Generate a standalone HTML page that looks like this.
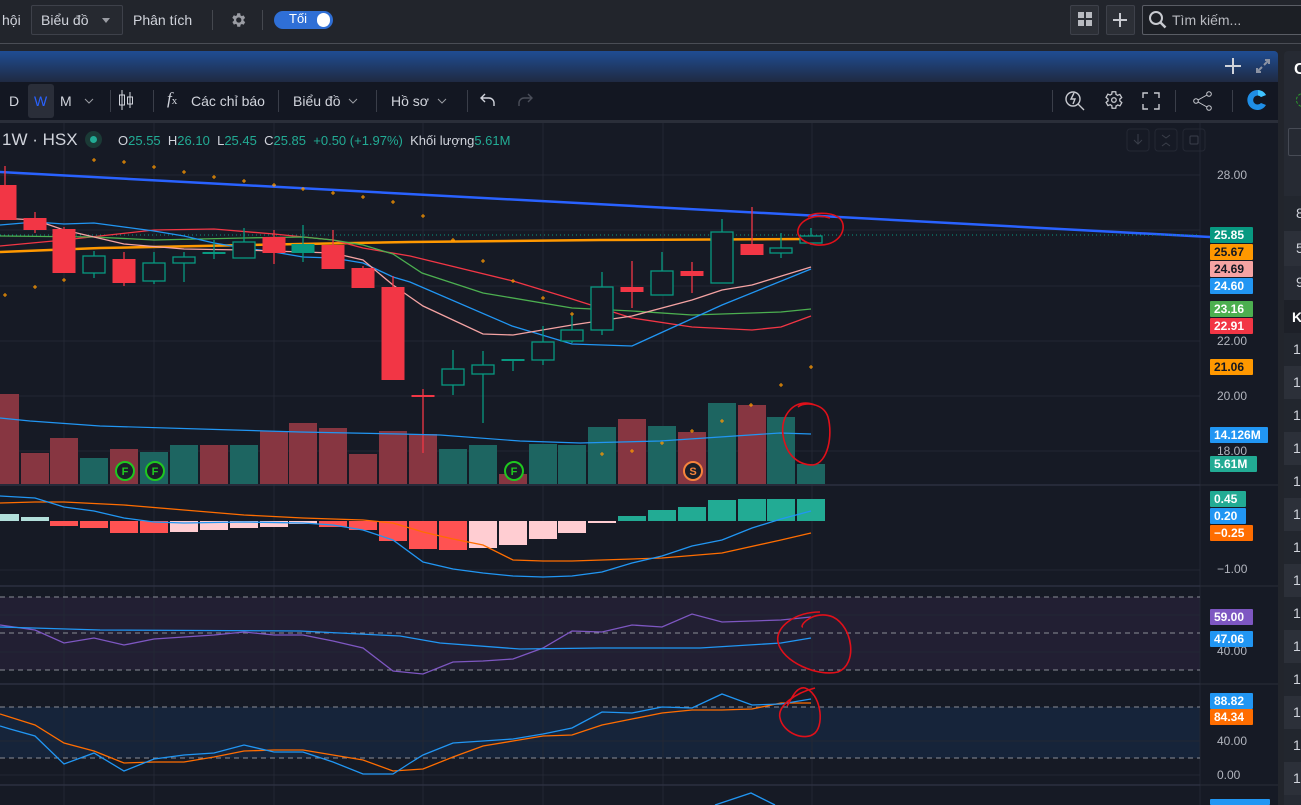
<!DOCTYPE html>
<html><head><meta charset="utf-8"><style>
*{margin:0;padding:0;box-sizing:border-box}
body{width:1301px;height:805px;overflow:hidden;background:#22252c;font-family:"Liberation Sans","Noto Sans CJK SC",sans-serif;color:#d1d4dc;position:relative}
.a{position:absolute}
.t{font-size:14px;white-space:nowrap}
.sep{position:absolute;width:1px;background:#3a3e49}
.badge{position:absolute;left:1210px;height:16px;font-size:12px;font-weight:bold;line-height:16px;padding-left:4px;border-radius:1px}
.ax{position:absolute;left:1217px;font-size:12px;color:#b2b5be}
.row{position:absolute;left:1284px;width:17px;height:33px;font-size:14px;color:#d1d4dc;padding:8px 0 0 9px}
</style></head><body>
<div class="a" style="left:0;top:0;width:1301px;height:44px;background:#22252c;border-bottom:1px solid #4a4d55"></div>
<div class="a t" style="top:12px;left:2px">hội</div>
<div class="a" style="left:31px;top:5px;width:92px;height:30px;border:1px solid #3e414a;background:#262930;border-radius:2px"></div>
<div class="a t" style="left:41px;top:12px">Biểu đồ</div>
<div class="a" style="left:102px;top:18px;width:0;height:0;border-left:4px solid transparent;border-right:4px solid transparent;border-top:5px solid #9a9ca3"></div>
<div class="a t" style="left:133px;top:12px">Phân tích</div>
<div class="sep" style="left:212px;top:10px;height:20px;background:#45484f"></div>
<svg class="a" style="left:229px;top:11px" width="18" height="18" viewBox="0 0 24 24"><path fill="#9a9ca3" d="M19.4 13a7.5 7.5 0 000-2l2.1-1.6-2-3.5-2.5 1a7 7 0 00-1.7-1L15 3h-4l-.4 2.6a7 7 0 00-1.7 1l-2.5-1-2 3.5L6.6 11a7.5 7.5 0 000 2l-2.1 1.6 2 3.5 2.5-1a7 7 0 001.7 1L11 21h4l.4-2.6a7 7 0 001.7-1l2.5 1 2-3.5zM13 15.5a3.5 3.5 0 110-7 3.5 3.5 0 010 7z"/></svg>
<div class="sep" style="left:262px;top:10px;height:20px;background:#45484f"></div>
<div class="a" style="left:274px;top:11px;width:59px;height:18px;background:#2f6fd6;border-radius:9px"></div>
<div class="a" style="left:289px;top:11px;font-size:13px;color:#fff">Tối</div>
<div class="a" style="left:317px;top:13px;width:13px;height:14px;background:#fff;border-radius:7px"></div>
<div class="a" style="left:1070px;top:5px;width:29px;height:30px;border:1px solid #3e414a;background:#2c2f36;border-radius:2px"></div>
<div class="a" style="left:1078px;top:12px;width:6px;height:6px;background:#b8bac0"></div><div class="a" style="left:1086px;top:12px;width:6px;height:6px;background:#b8bac0"></div>
<div class="a" style="left:1078px;top:20px;width:6px;height:6px;background:#b8bac0"></div><div class="a" style="left:1086px;top:20px;width:6px;height:6px;background:#b8bac0"></div>
<div class="a" style="left:1106px;top:5px;width:29px;height:30px;border:1px solid #3e414a;background:#2c2f36;border-radius:2px"></div>
<div class="a" style="left:1113px;top:19px;width:14px;height:2px;background:#c8cad0"></div><div class="a" style="left:1119px;top:13px;width:2px;height:14px;background:#c8cad0"></div>
<div class="a" style="left:1142px;top:5px;width:165px;height:30px;border:1px solid #5a5d65;background:#1c1f25;border-radius:2px"></div>
<svg class="a" style="left:1148px;top:10px" width="20" height="20" viewBox="0 0 20 20"><circle cx="8" cy="8" r="6" fill="none" stroke="#c8cad0" stroke-width="2"/><path d="M12.5 12.5l5 5" stroke="#c8cad0" stroke-width="2.5"/></svg>
<div class="a t" style="left:1172px;top:12px;color:#b8bac0">Tìm kiếm...</div>

<div class="a" style="left:1284px;top:51px;width:17px;height:754px;background:#262a33;border-radius:4px 0 0 0"></div>
<div class="a" style="left:1294px;top:61px;font-size:16px;font-weight:bold;color:#fff">C</div>
<div class="a" style="left:1296px;top:93px;width:14px;height:14px;border:1px dashed #2c9a2c;border-radius:50%"></div>
<div class="a" style="left:1288px;top:128px;width:20px;height:28px;border:1px solid #474b55;border-radius:2px"></div>
<div class="a" style="left:1284px;top:196px;width:17px;height:35px;background:#22262e"></div>
<div class="a" style="left:1296px;top:205px;font-size:14px">8</div>
<div class="a" style="left:1284px;top:231px;width:17px;height:35px;background:#2c3039"></div>
<div class="a" style="left:1296px;top:240px;font-size:14px">5</div>
<div class="a" style="left:1296px;top:274px;font-size:14px">9</div>
<div class="a" style="left:1284px;top:300px;width:17px;height:33px;background:#1d2028"></div>
<div class="a" style="left:1292px;top:309px;font-size:14px;font-weight:bold;color:#fff">K</div>
<div class="row" style="top:333px;background:#22262e">1</div>
<div class="row" style="top:366px;background:#2c3039">1</div>
<div class="row" style="top:399px;background:#22262e">1</div>
<div class="row" style="top:432px;background:#2c3039">1</div>
<div class="row" style="top:465px;background:#22262e">1</div>
<div class="row" style="top:498px;background:#2c3039">1</div>
<div class="row" style="top:531px;background:#22262e">1</div>
<div class="row" style="top:564px;background:#2c3039">1</div>
<div class="row" style="top:597px;background:#22262e">1</div>
<div class="row" style="top:630px;background:#2c3039">1</div>
<div class="row" style="top:663px;background:#22262e">1</div>
<div class="row" style="top:696px;background:#2c3039">1</div>
<div class="row" style="top:729px;background:#22262e">1</div>
<div class="row" style="top:762px;background:#2c3039">1</div>

<div class="a" style="left:0;top:51px;width:1278px;height:31px;background:linear-gradient(#1f4d93,#1f2a42);border-radius:0 4px 0 0"></div>
<div class="a" style="left:1225px;top:65px;width:16px;height:2px;background:#d0d3da"></div><div class="a" style="left:1232px;top:58px;width:2px;height:16px;background:#d0d3da"></div>
<svg class="a" style="left:1254px;top:57px" width="18" height="18" viewBox="0 0 18 18"><path d="M3 15l5-5M15 3l-5 5M11 3h4v4M3 11v4h4" stroke="#8c93a3" stroke-width="2" fill="none"/></svg>
<div class="a" style="left:0;top:82px;width:1278px;height:38px;background:#131722"></div>
<div class="a" style="left:0;top:120px;width:1278px;height:3px;background:#2a2e39"></div>
<div class="a t" style="left:9px;top:93px">D</div>
<div class="a" style="left:28px;top:84px;width:26px;height:34px;background:#2a2e39;border-radius:3px"></div>
<div class="a t" style="left:34px;top:93px;color:#2962ff">W</div>
<div class="a t" style="left:60px;top:93px">M</div>
<svg class="a" style="left:84px;top:97px" width="10" height="8"><path d="M1 2l4 4 4-4" stroke="#9a9ca3" fill="none"/></svg>
<div class="sep" style="left:110px;top:90px;height:22px"></div>
<svg class="a" style="left:117px;top:89px" width="18" height="22" viewBox="0 0 18 22"><path d="M5 1v20M13 3v16" stroke="#d1d4dc"/><rect x="2.5" y="6" width="5" height="10" fill="none" stroke="#d1d4dc"/><rect x="10.5" y="8" width="5" height="7" fill="none" stroke="#d1d4dc"/></svg>
<div class="sep" style="left:153px;top:90px;height:22px"></div>
<div class="a" style="left:167px;top:89px;font-family:'Liberation Serif',serif;font-style:italic;font-size:17px">f<span style="font-size:11px;font-style:normal">x</span></div>
<div class="a t" style="left:191px;top:93px">Các chỉ báo</div>
<div class="sep" style="left:278px;top:90px;height:22px"></div>
<div class="a t" style="left:293px;top:93px">Biểu đồ</div>
<svg class="a" style="left:348px;top:97px" width="10" height="8"><path d="M1 2l4 4 4-4" stroke="#9a9ca3" fill="none"/></svg>
<div class="sep" style="left:376px;top:90px;height:22px"></div>
<div class="a t" style="left:391px;top:93px">Hồ sơ</div>
<svg class="a" style="left:437px;top:97px" width="10" height="8"><path d="M1 2l4 4 4-4" stroke="#9a9ca3" fill="none"/></svg>
<div class="sep" style="left:467px;top:90px;height:22px"></div>
<svg class="a" style="left:479px;top:92px" width="18" height="16"><path d="M6 2L2 6l4 4M2 6h8a5 5 0 015 5v3" stroke="#d1d4dc" fill="none" stroke-width="1.4"/></svg>
<svg class="a" style="left:516px;top:92px" width="18" height="16"><path d="M12 2l4 4-4 4M16 6H8a5 5 0 00-5 5v3" stroke="#4a4e59" fill="none" stroke-width="1.4"/></svg>
<div class="sep" style="left:1052px;top:90px;height:22px"></div>
<svg class="a" style="left:1064px;top:89px" width="22" height="22" viewBox="0 0 22 22"><circle cx="9" cy="10" r="7" fill="none" stroke="#c8cad0" stroke-width="1.4"/><path d="M14 15l6 6M10 4l-3 6h4l-2 5" stroke="#c8cad0" fill="none" stroke-width="1.4"/></svg>
<svg class="a" style="left:1102px;top:89px" width="22" height="22" viewBox="0 0 24 24"><path fill="none" stroke="#c8cad0" stroke-width="1.4" d="M19.4 13a7.5 7.5 0 000-2l2.1-1.6-2-3.5-2.5 1a7 7 0 00-1.7-1L15 3h-4l-.4 2.6a7 7 0 00-1.7 1l-2.5-1-2 3.5L6.6 11a7.5 7.5 0 000 2l-2.1 1.6 2 3.5 2.5-1a7 7 0 001.7 1L11 21h4l.4-2.6a7 7 0 001.7-1l2.5 1 2-3.5z"/><circle cx="13" cy="12" r="2.5" fill="none" stroke="#c8cad0" stroke-width="1.4"/></svg>
<svg class="a" style="left:1142px;top:92px" width="18" height="18"><path d="M1 6V1h5M12 1h5v5M17 12v5h-5M6 17H1v-5" stroke="#c8cad0" fill="none" stroke-width="1.4"/></svg>
<div class="sep" style="left:1175px;top:90px;height:22px"></div>
<svg class="a" style="left:1193px;top:91px" width="20" height="20"><circle cx="16" cy="3" r="2.3" fill="none" stroke="#c8cad0"/><circle cx="3" cy="10" r="2.3" fill="none" stroke="#c8cad0"/><circle cx="16" cy="17" r="2.3" fill="none" stroke="#c8cad0"/><path d="M5 9l9-5M5 11l9 5" stroke="#c8cad0"/></svg>
<div class="sep" style="left:1232px;top:90px;height:22px"></div>
<svg class="a" style="left:1246px;top:88px" width="24" height="24" viewBox="0 0 24 24"><path d="M20 7a10 10 0 100 10l-5-2a4.5 4.5 0 110-6z" fill="#1f8ee6"/><path d="M12 2a10 10 0 018 5l-5 2a4.5 4.5 0 00-3-1.5z" fill="#40c4ff"/></svg>

<svg class="a" style="left:0;top:123px" width="1278" height="682" viewBox="0 123 1278 682">
<rect x="0" y="123" width="1278" height="682" fill="#161a25"/>
<rect x="0" y="597" width="1200" height="73" fill="#221f33"/>
<rect x="0" y="707" width="1200" height="51" fill="#16243a"/>
<g stroke="#232734" stroke-width="1">
<path d="M0 175H1200M0 230H1200M0 286H1200M0 341H1200M0 396H1200M0 451H1200M0 570H1200M0 615H1200M0 652H1200M0 741H1200M0 775H1200"/>
<path d="M64 123V805M154 123V805M274 123V805M423 123V805M543 123V805M663 123V805M812 123V805M1200 123V805"/>
</g>
<g stroke="#2c3040" stroke-width="1.5"><path d="M0 485H1200M0 586H1200M0 684H1200M0 785H1200"/></g>
<g stroke="#2a2e39"><path d="M1200 485H1278M1200 586H1278M1200 684H1278M1200 785H1278"/></g>
<g stroke="#8a8d96" stroke-dasharray="5,4" stroke-width="1"><path d="M0 597H1200M0 633H1200M0 670H1200M0 707H1200M0 758H1200"/></g>
<rect x="1127" y="129" width="22" height="22" rx="3" fill="none" stroke="#242834"/><rect x="1155" y="129" width="22" height="22" rx="3" fill="none" stroke="#242834"/><rect x="1183" y="129" width="22" height="22" rx="3" fill="none" stroke="#242834"/>
<path d="M1138 134v10M1134 140l4 4 4-4M1162 135l4 3 4-3M1162 146l4-3 4 3" stroke="#3a3e4a" fill="none"/><rect x="1190" y="136" width="8" height="8" rx="1" fill="none" stroke="#3a3e4a"/>
<g id="vol"></g>
<polyline fill="none" stroke="#2962ff" stroke-width="2.5" points="0,172 1210,237"/>
<path d="M0 235H1200" stroke="#089981" stroke-dasharray="1,3"/>
<polyline fill="none" stroke="#ff9800" stroke-width="2.5" points="0,252 100,248 200,246 300,244 410,242 600,240 811,239"/>
<polyline fill="none" stroke="#f23645" stroke-width="1.3" points="0,246 64,240 154,230 214,229 274,234 333,240 363,248 410,256 513,281 572,299 632,318 692,327 752,330 781,327 811,316"/>
<polyline fill="none" stroke="#4caf50" stroke-width="1.3" points="0,236 94,237 154,240 244,238 303,237 333,240 363,245 393,254 422,273 483,293 572,308 632,311 692,315 781,312 811,309"/>
<polyline fill="none" stroke="#2196f3" stroke-width="1.3" points="0,225 35,222 64,224 94,223 124,227 154,231 184,236 214,243 244,248 274,252 303,257 333,258 363,263 393,277 410,282 512,326 572,344 632,346 722,305 811,269"/>
<polyline fill="none" stroke="#f5a3a3" stroke-width="1.3" points="0,218 35,220 64,230 124,244 184,249 244,250 303,252 333,253 363,260 393,285 410,297 423,306 483,334 513,335 572,325 632,316 692,300 722,290 752,285 811,267"/>
<g id="cdl"></g>
<g id="dots" fill="#ff9800"></g>
<polyline fill="none" stroke="#2196f3" stroke-width="1.2" points="0,418 30,421 100,426 200,429 300,432 400,434 440,435 520,441 580,443 660,441 720,437 780,433 811,434"/>
<g font-size="11" font-weight="bold" text-anchor="middle">
<circle cx="125" cy="471" r="9" fill="#1a1e28" stroke="#1fc81f" stroke-width="2"/><text x="125" y="475" fill="#1fc81f">F</text>
<circle cx="155" cy="471" r="9" fill="#1a1e28" stroke="#1fc81f" stroke-width="2"/><text x="155" y="475" fill="#1fc81f">F</text>
<circle cx="514" cy="471" r="9" fill="#1a1e28" stroke="#1fc81f" stroke-width="2"/><text x="514" y="475" fill="#1fc81f">F</text>
<circle cx="693" cy="471" r="9" fill="#1a1e28" stroke="#f7843c" stroke-width="2"/><text x="693" y="475" fill="#f7843c">S</text>
</g>
<g id="macd"></g>
<polyline fill="none" stroke="#ff6d00" stroke-width="1.3" points="0,503 35,502 64,502 124,505 184,510 244,515 303,518 363,520 393,523 423,532 453,539 483,545 513,560 543,561 572,561 602,560 662,558 722,553 781,540 811,533"/>
<polyline fill="none" stroke="#2196f3" stroke-width="1.3" points="0,496 35,498 64,507 94,511 124,518 154,522 184,523 244,522 303,523 333,525 363,530 393,540 423,562 453,569 483,573 513,576 543,577 572,576 602,572 632,563 662,556 692,546 722,540 752,528 781,519 811,511"/>
<polyline fill="none" stroke="#7e57c2" stroke-width="1.3" points="0,625 35,630 64,643 94,638 124,645 154,639 184,637 214,635 244,632 274,635 303,635 333,641 363,648 393,671 423,674 453,662 483,661 513,659 543,648 572,631 602,632 632,625 662,627 692,614 722,622 752,621 781,620 811,617"/>
<polyline fill="none" stroke="#2196f3" stroke-width="1.3" points="0,627 100,630 300,631 400,636 440,643 520,649 600,648 700,648 781,643 811,638"/>
<polyline fill="none" stroke="#ff6d00" stroke-width="1.3" points="0,714 35,725 64,743 94,751 124,763 154,762 184,762 214,757 244,751 274,750 303,750 333,755 363,760 393,771 423,769 453,757 483,746 513,741 543,736 572,735 602,725 632,719 662,713 692,710 722,710 752,709 781,703 811,703"/>
<polyline fill="none" stroke="#2196f3" stroke-width="1.3" points="0,726 10,729 35,736 64,764 94,753 124,771 154,759 184,755 214,753 244,745 274,752 303,752 333,762 363,774 393,774 410,763 423,755 453,743 483,741 513,739 543,734 572,728 602,712 632,713 662,707 692,708 722,694 752,705 781,704 811,699"/>
<polyline fill="none" stroke="#2196f3" stroke-width="1.3" points="715,805 751,793 775,805"/>
<g fill="none" stroke="#e0101a" stroke-width="1.6">
<path d="M830 218c-15-5-30 2-32 12-2 10 15 18 30 14 15-4 20-20 10-27-8-5-25-5-30 0"/>
<path d="M815 405c-20-8-35 10-32 30 3 20 15 30 30 30 15-2 20-30 15-48-5-15-25-15-30-10"/>
<path d="M820 612c-25 0-45 15-42 30 4 20 40 35 60 30 20-8 15-45-5-55-20-8-35 10-30 10"/>
<path d="M815 688c-20 5-38 18-35 30 3 15 25 24 35 15 10-10 5-40-10-45-10-2-15 15-18 18"/>
</g>
</svg>
<div class="a" style="left:2px;top:130px;font-size:17px;color:#d1d4dc">1W · HSX</div>
<div class="a" style="left:85px;top:131px;width:17px;height:17px;border-radius:50%;background:#1b3a36"></div>
<div class="a" style="left:90px;top:136px;width:7px;height:7px;border-radius:50%;background:#22ab94"></div>
<div class="a" style="left:118px;top:133px;font-size:13px;color:#d1d4dc">O<span style="color:#22ab94">25.55</span> &nbsp;H<span style="color:#22ab94">26.10</span> &nbsp;L<span style="color:#22ab94">25.45</span> &nbsp;C<span style="color:#22ab94">25.85</span> &nbsp;<span style="color:#22ab94">+0.50 (+1.97%)</span> &nbsp;Khối lượng<span style="color:#22ab94">5.61M</span></div>
<div class="ax" style="top:168px">28.00</div>
<div class="ax" style="top:334px">22.00</div>
<div class="ax" style="top:389px">20.00</div>
<div class="ax" style="top:444px">18.00</div>
<div class="ax" style="top:562px">−1.00</div>
<div class="ax" style="top:644px">40.00</div>
<div class="ax" style="top:734px">40.00</div>
<div class="ax" style="top:768px">0.00</div>
<div class="badge" style="top:227px;width:43px;background:#089981;color:#fff">25.85</div>
<div class="badge" style="top:244px;width:43px;background:#ff9800;color:#131722">25.67</div>
<div class="badge" style="top:261px;width:43px;background:#f5a3a3;color:#131722">24.69</div>
<div class="badge" style="top:278px;width:43px;background:#2196f3;color:#fff">24.60</div>
<div class="badge" style="top:301px;width:43px;background:#4caf50;color:#fff">23.16</div>
<div class="badge" style="top:318px;width:43px;background:#f23645;color:#fff">22.91</div>
<div class="badge" style="top:359px;width:43px;background:#ff9800;color:#131722">21.06</div>
<div class="badge" style="top:427px;width:58px;background:#2196f3;color:#fff">14.126M</div>
<div class="badge" style="top:456px;width:47px;background:#22ab94;color:#fff">5.61M</div>
<div class="badge" style="top:491px;width:36px;background:#22ab94;color:#fff">0.45</div>
<div class="badge" style="top:508px;width:36px;background:#2196f3;color:#fff">0.20</div>
<div class="badge" style="top:525px;width:43px;background:#ff6d00;color:#fff">−0.25</div>
<div class="badge" style="top:609px;width:43px;background:#7e57c2;color:#fff">59.00</div>
<div class="badge" style="top:631px;width:43px;background:#2196f3;color:#fff">47.06</div>
<div class="badge" style="top:693px;width:43px;background:#2196f3;color:#fff">88.82</div>
<div class="badge" style="top:709px;width:43px;background:#ff6d00;color:#fff">84.34</div>
<div class="badge" style="top:799px;width:60px;height:6px;background:#2196f3;color:#fff"></div>
<script>
var NS="http://www.w3.org/2000/svg";
function el(p,t,a){var e=document.createElementNS(NS,t);for(var k in a)e.setAttribute(k,a[k]);p.appendChild(e);return e;}
var C=[["r",5,185,220,166,220],["r",35,218,230,212,233],["r",64,229,273,227,273],["h",94,256,273,251,278],["r",124,259,283,252,286],["h",154,263,281,252,284],["h",184,257,263,252,282],["g",214,252,254,240,259],["h",244,242,258,228,258],["r",274,237,253,230,264],["g",303,244,253,225,262],["r",333,245,269,230,269],["r",363,268,288,266,288],["r",393,287,380,276,380],["r",423,395,397,389,453],["h",453,369,385,350,395],["h",483,365,374,351,423],["g",513,359,361,359,371],["h",543,342,360,326,365],["h",572,330,341,314,343],["h",602,287,330,272,335],["r",632,287,292,261,308],["h",662,271,295,252,295],["r",692,271,276,262,293],["h",722,232,283,219,283],["r",752,244,255,207,255],["h",781,248,253,233,258],["h",811,236,243,228,245]];
var V=[[394,0],[453,0],[438,0],[458,1],[449,0],[452,1],[445,1],[445,0],[445,1],[431,0],[423,0],[428,0],[454,0],[431,0],[434,0],[449,1],[445,1],[474,0],[444,1],[445,1],[427,1],[419,0],[426,1],[432,0],[403,1],[405,0],[417,1],[464,1]];
var H=[[514,"#b2dfdb"],[517,"#b2dfdb"],[526,"#ff5252"],[528,"#ff5252"],[533,"#ff5252"],[533,"#ff5252"],[532,"#ffcdd2"],[530,"#ffcdd2"],[528,"#ffcdd2"],[527,"#ffcdd2"],[524,"#ffcdd2"],[527,"#ff5252"],[530,"#ff5252"],[541,"#ff5252"],[549,"#ff5252"],[550,"#ff5252"],[548,"#ffcdd2"],[545,"#ffcdd2"],[539,"#ffcdd2"],[533,"#ffcdd2"],[523,"#ffcdd2"],[516,"#22ab94"],[510,"#22ab94"],[507,"#22ab94"],[500,"#22ab94"],[499,"#22ab94"],[499,"#22ab94"],[499,"#22ab94"]];
var cg=document.getElementById("cdl"),vg=document.getElementById("vol"),mg=document.getElementById("macd"),dg=document.getElementById("dots");
C.forEach(function(c,i){var x=c[1],col=c[0]=="r"?"#f23645":"#089981";
 var vx=x-14;var v=V[i];el(vg,"rect",{x:vx,y:v[0],width:28,height:484-v[0],fill:v[1]?"#1d6561":"#873641"});
 var h=H[i];var t=Math.min(h[0],521),b=Math.max(h[0],521);el(mg,"rect",{x:vx,y:t,width:28,height:b-t,fill:h[1]});
 el(cg,"line",{x1:x,x2:x,y1:c[4],y2:c[5],stroke:col,"stroke-width":1.3});
 var bh=Math.max(c[3]-c[2],2);
 if(c[0]=="h"){el(cg,"rect",{x:x-11,y:c[2],width:22,height:bh,fill:"#161a25",stroke:col,"stroke-width":1.3});}
 else el(cg,"rect",{x:x-11.5,y:c[2],width:23,height:bh,fill:col});
});
var D=[[5,295],[35,287],[64,280],[94,160],[124,162],[154,167],[184,172],[214,177],[244,181],[274,185],[303,189],[333,193],[363,197],[393,202],[423,216],[453,240],[483,261],[513,281],[543,298],[572,314],[602,454],[632,451],[662,443],[692,431],[722,421],[751,405],[781,385],[811,367]];
D.forEach(function(d){el(dg,"rect",{x:d[0]-2,y:d[1]-0.5,width:4,height:1});el(dg,"rect",{x:d[0]-0.5,y:d[1]-2,width:1,height:4});});
</script>
</body></html>
